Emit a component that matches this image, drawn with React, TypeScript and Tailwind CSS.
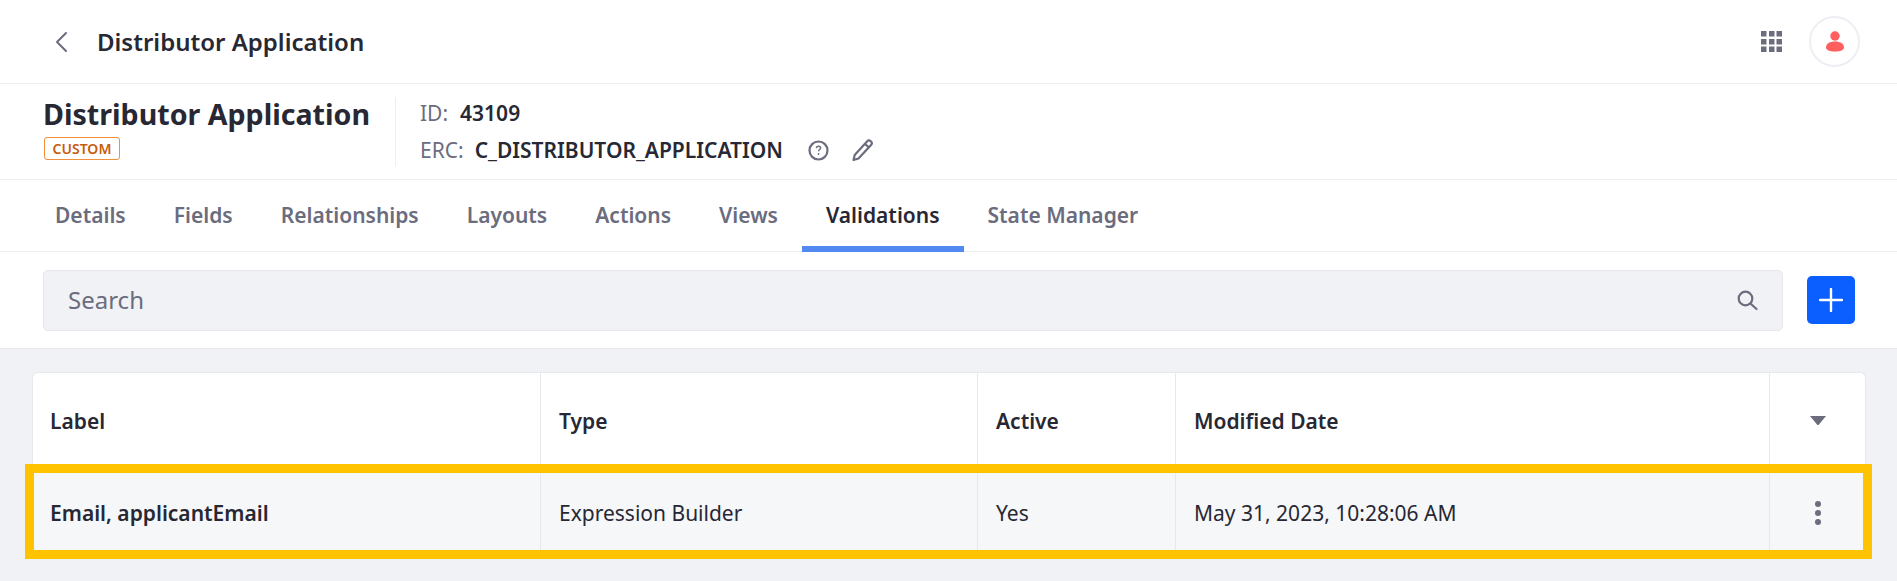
const font = "font-['Noto_Sans',sans-serif]";

function Tab({ label, active }: { label: string; active?: boolean }) {
  return (
    <div
      className={
        active
          ? '-mb-px flex h-[72px] items-center border-b-[6px] border-[#528af2] px-6 pt-[5px] text-[21px] font-semibold text-[#272833]'
          : '-mb-px flex h-[72px] items-center border-b-[6px] border-transparent px-6 pt-[5px] text-[21px] font-semibold text-[#6b6c7e]'
      }
    >
      {label}
    </div>
  );
}

function Cell({ children, className = 'pl-[18px]' }: { children?: React.ReactNode; className?: string }) {
  return <div className={`flex items-center border-r border-[#e7e7ed] pr-[10px] pt-[5px] ${className}`}>{children}</div>;
}

export default function App() {
  const tabs = ['Details', 'Fields', 'Relationships', 'Layouts', 'Actions', 'Views'];
  return (
    <div className={`${font} relative h-[581px] w-[1897px] overflow-hidden bg-[#f1f2f5] text-[#272833]`}>
      <div className="flex h-[84px] items-center border-b border-[#eeeef2] bg-white pl-[54px] pr-[37px]">
        <svg width="14" height="22" viewBox="0 0 14 22" fill="none" stroke="#6b6c7e" strokeWidth="2" strokeLinecap="round" strokeLinejoin="round">
          <path d="M12 2 3 11l9 9" />
        </svg>
        <div className="ml-[29px] text-[24px] font-semibold">Distributor Application</div>
        <div className="ml-auto flex items-center gap-[27px]">
          <svg width="21" height="21" viewBox="0 0 21 21" fill="#6b6c7e">
            <rect x="0" y="0" width="5.5" height="5.5" />
            <rect x="8" y="0" width="5.5" height="5.5" />
            <rect x="15.5" y="0" width="5.5" height="5.5" />
            <rect x="0" y="8" width="5.5" height="5.5" />
            <rect x="8" y="8" width="5.5" height="5.5" />
            <rect x="15.5" y="8" width="5.5" height="5.5" />
            <rect x="0" y="15.5" width="5.5" height="5.5" />
            <rect x="8" y="15.5" width="5.5" height="5.5" />
            <rect x="15.5" y="15.5" width="5.5" height="5.5" />
          </svg>
          <div className="flex h-[51px] w-[51px] items-center justify-center rounded-full border-2 border-[#eeeef4] bg-white">
            <svg width="18" height="21" viewBox="0 0 18 21" fill="#ff5f5f">
              <circle cx="9" cy="5" r="4.7" />
              <path d="M0 16.5C0 12.5 4 10.5 9 10.5s9 2 9 6c0 2.5-3.5 4-9 4s-9-1.5-9-4Z" />
            </svg>
          </div>
        </div>
      </div>

      <div className="flex h-[96px] items-center border-b border-[#eeeef2] bg-white pl-[43px]">
        <div className="flex h-[69px] w-[353px] flex-col justify-start border-r border-[#eeeef2]">
          <div className="mt-[-2px] text-[28.6px] font-bold leading-[38px]">Distributor Application</div>
          <div className="ml-px mt-[4px] flex h-[23px] w-[76px] items-center justify-center rounded-[3px] border border-[#f08f3c] text-[14px] font-semibold uppercase text-[#c75d0a]">
            Custom
          </div>
        </div>
        <div className="ml-[24px] flex flex-col gap-[10px] text-[21px] leading-[27px]">
          <div className="flex items-center">
            <span className="text-[#6b6c7e]">ID:</span>
            <span className="ml-[12px] font-semibold">43109</span>
          </div>
          <div className="flex items-center">
            <span className="text-[#6b6c7e]">ERC:</span>
            <span className="ml-[11px] font-semibold">C_DISTRIBUTOR_APPLICATION</span>
            <svg className="ml-[25px]" width="21" height="21" viewBox="0 0 21 21" fill="none" stroke="#6b6c7e" strokeWidth="2.2">
              <circle cx="10.5" cy="10.5" r="9" />
              <path d="M8.5 8.2c0-1.2 1-2 2.1-2s2 .8 2 1.8c0 1.5-2 1.6-2 3.2" strokeWidth="1.5" fill="none" />
              <circle cx="10.6" cy="14" r="0.9" fill="#6b6c7e" stroke="none" />
            </svg>
            <svg className="ml-[22px]" width="23" height="23" viewBox="0 0 23 23" fill="none" stroke="#6b6c7e" strokeWidth="2.2" strokeLinejoin="round">
              <path d="M16 2.5a2.6 2.6 0 0 1 4 3.6L7.5 19.5 2.5 21l1.2-5Z" />
              <path d="m14 5 4.5 3.8" />
            </svg>
          </div>
        </div>
      </div>

      <div className="flex h-[72px] items-start border-b border-[#eeeef2] bg-white pl-[31px]">
        {tabs.map((t) => (
          <Tab key={t} label={t} />
        ))}
        <Tab label="Validations" active />
        <Tab label="State Manager" />
      </div>

      <div className="flex h-[97px] items-center border-b border-[#e7e7ed] bg-white pl-[43px] pr-[42px]">
        <div className="flex h-[61px] flex-1 items-center justify-between rounded-[5px] border border-[#e7e7ed] bg-[#f1f2f5] pl-[24px] pr-[24px] text-[24px] text-[#6b6c7e]">
          <span>Search</span>
          <svg width="21" height="21" viewBox="0 0 21 21" fill="none" stroke="#6b6c7e" strokeWidth="2.2" strokeLinecap="round">
            <circle cx="8.5" cy="8.5" r="6.8" />
            <path d="m13.7 13.7 5.8 5.3" />
          </svg>
        </div>
        <div className="ml-[24px] flex h-[48px] w-[48px] items-center justify-center rounded-[5px] bg-[#0b5fff]">
          <svg width="24" height="24" viewBox="0 0 24 24" fill="none" stroke="#fff" strokeWidth="2.4" strokeLinecap="round">
            <path d="M12 1v22M1 12h22" />
          </svg>
        </div>
      </div>

      <div className="pl-[32px] pr-[31px] pt-[23px]">
        <div className="overflow-hidden rounded-t-[6px] border border-b-0 border-[#e7e7ed] bg-white text-[21px]">
          <div className="grid h-[92px] grid-cols-[508px_437px_198px_594px_1fr] font-semibold">
            <Cell className="pl-[17px]">Label</Cell>
            <Cell>Type</Cell>
            <Cell>Active</Cell>
            <Cell>Modified Date</Cell>
            <div className="flex items-center justify-center pt-[2px]">
              <svg width="16" height="9" viewBox="0 0 16 9" fill="#6b6c7e">
                <path d="M0 0h16L9 8.4a1.3 1.3 0 0 1-2 0Z" />
              </svg>
            </div>
          </div>
          <div className="grid h-[92px] grid-cols-[508px_437px_198px_594px_1fr] bg-[#f6f7f9]">
            <Cell className="pl-[17px] font-semibold">Email, applicantEmail</Cell>
            <Cell>Expression Builder</Cell>
            <Cell>Yes</Cell>
            <Cell>May 31, 2023, 10:28:06 AM</Cell>
            <div className="flex flex-col items-center justify-center gap-[3px] pt-[3px]">
              <span className="h-[6px] w-[6px] rounded-full bg-[#6b6c7e]" />
              <span className="h-[6px] w-[6px] rounded-full bg-[#6b6c7e]" />
              <span className="h-[6px] w-[6px] rounded-full bg-[#6b6c7e]" />
            </div>
          </div>
        </div>
      </div>

      {/* annotation highlight drawn over the row */}
      <div className="absolute left-[25px] top-[464px] h-[95px] w-[1847px] border-[9px] border-[#ffc300]" />
    </div>
  );
}
